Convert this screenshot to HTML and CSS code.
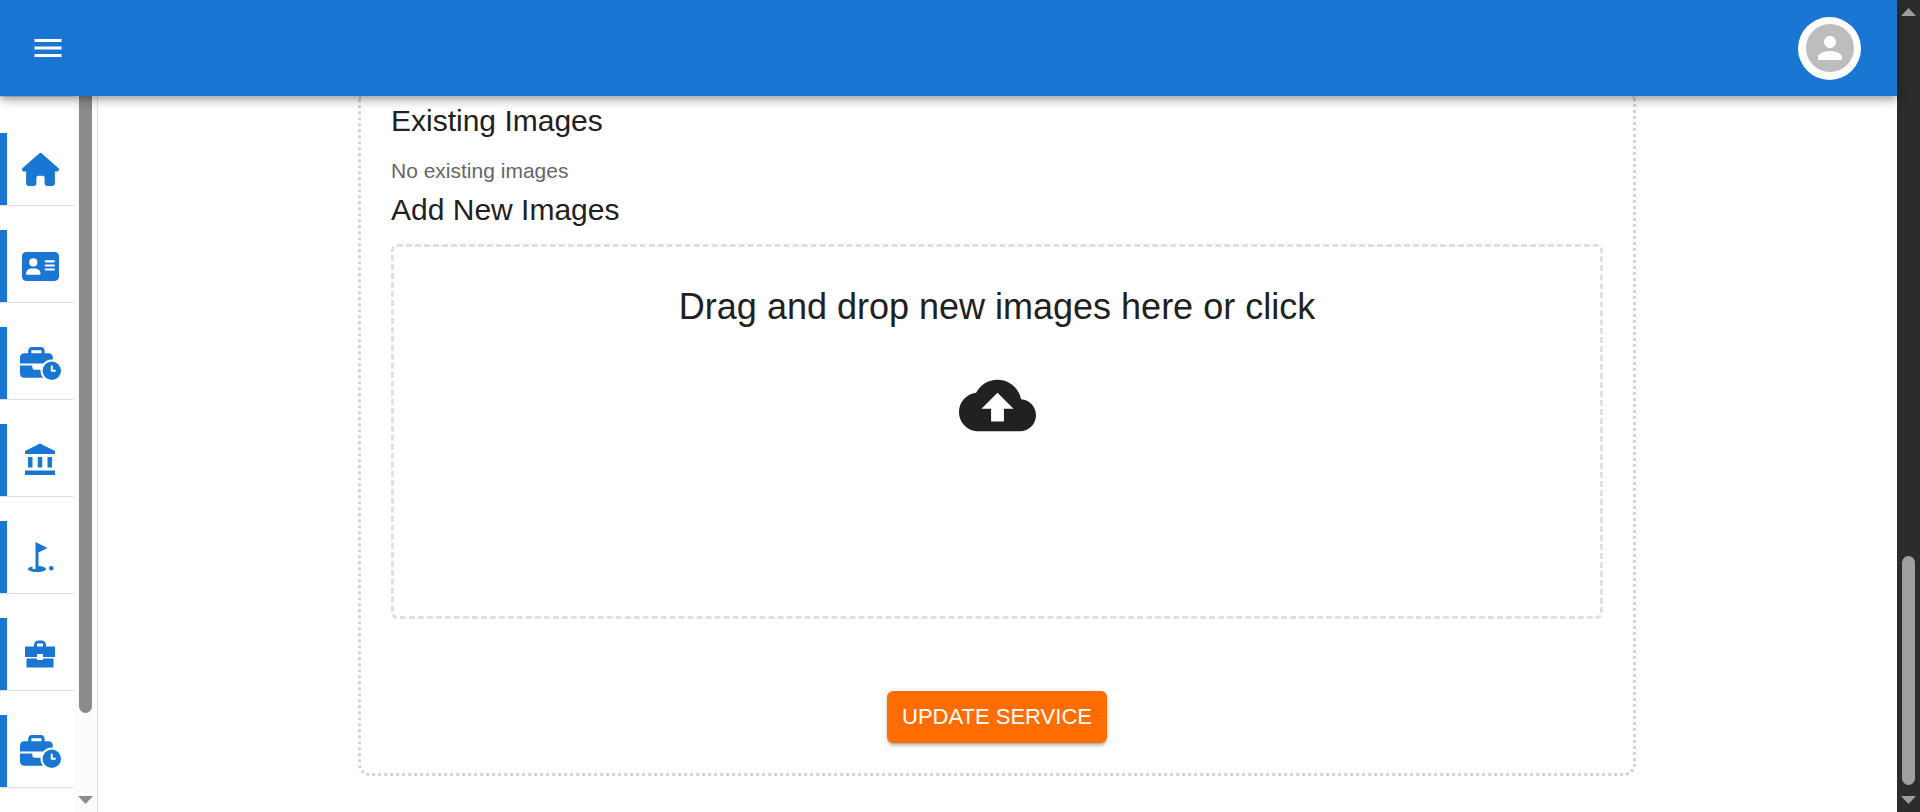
FILE: index.html
```html
<!DOCTYPE html>
<html lang="en">
<head>
  <meta charset="utf-8">
  <title>Update Service</title>
  <link rel="stylesheet" href="styles.css">
</head>
<body>
  <svg class="sprite" aria-hidden="true">
    <symbol id="business-time" viewBox="0 0 640 512">
      <path d="M184 48H328c4.400 0 8 3.600 8 8V96H176V56c0-4.400 3.600-8 8-8zm-56 8V96H64C28.700 96 0 124.700 0 160v96H192 352h8.200c32.300-39.100 81.100-64 135.800-64c5.400 0 10.700 .2 16 .7V160c0-35.300-28.700-64-64-64H384V56c0-30.900-25.100-56-56-56H184c-30.900 0-56 25.100-56 56zM320 352H224c-17.700 0-32-14.300-32-32V288H0V416c0 35.300 28.700 64 64 64H360.200C335.100 449.600 320 410.500 320 368c0-5.400 .2-10.700 .7-16l-.7 0zm320 16a144 144 0 1 0 -288 0 144 144 0 1 0 288 0zM496 288c8.800 0 16 7.200 16 16v48h32c8.800 0 16 7.200 16 16s-7.200 16-16 16H496c-8.800 0-16-7.200-16-16V304c0-8.800 7.200-16 16-16z"/>
    </symbol>
  </svg>

  <div class="app">
    <header class="topbar">
      <button class="icon-button" type="button" aria-label="Open menu">
        <svg class="icon" viewBox="0 0 24 24"><path d="M3 18h18v-2H3zm0-5h18v-2H3zm0-7v2h18V6z"/></svg>
      </button>
      <button class="account" type="button" aria-label="Account">
        <span class="avatar">
          <svg class="icon" viewBox="0 0 24 24"><path d="M12 12c2.210 0 4-1.790 4-4s-1.790-4-4-4-4 1.790-4 4 1.790 4 4 4m0 2c-2.670 0-8 1.340-8 4v2h16v-2c0-2.660-5.330-4-8-4"/></svg>
        </span>
      </button>
    </header>

    <div class="body">
      <aside class="sidebar">
        <nav class="nav">
          <a class="nav-item" href="#" aria-label="Home">
            <svg class="icon-fa" viewBox="0 0 576 512"><path d="M575.8 255.500c0 18-15 32.100-32 32.100h-32l.7 160.200c0 2.700-.2 5.400-.5 8.100V472c0 22.100-17.900 40-40 40H456c-1.100 0-2.200 0-3.300-.1c-1.400 .1-2.800 .1-4.200 .1H416 392c-22.100 0-40-17.900-40-40V448 384c0-17.700-14.300-32-32-32H256c-17.700 0-32 14.300-32 32v64 24c0 22.100-17.900 40-40 40H160 128.100c-1.500 0-3-.1-4.500-.2c-1.200 .1-2.400 .2-3.600 .2H104c-22.100 0-40-17.900-40-40V360c0-.9 0-1.900 .1-2.800V287.600H32c-18 0-32-14-32-32.100c0-9 3-17 10-24L266.400 8c7-7 15-8 22-8s15 2 21 7L564.800 231.500c8 7 12 15 11 24z"/></svg>
          </a>
          <a class="nav-item" href="#" aria-label="Profile">
            <svg class="icon-fa" viewBox="0 0 576 512"><path d="M64 32C28.700 32 0 60.700 0 96V416c0 35.300 28.700 64 64 64H512c35.300 0 64-28.700 64-64V96c0-35.300-28.700-64-64-64H64zm80 256h64c44.200 0 80 35.800 80 80c0 8.800-7.200 16-16 16H80c-8.800 0-16-7.200-16-16c0-44.200 35.800-80 80-80zm-32-96a64 64 0 1 1 128 0 64 64 0 1 1 -128 0zm256-32H496c8.800 0 16 7.200 16 16s-7.200 16-16 16H368c-8.800 0-16-7.200-16-16s7.200-16 16-16zm0 64H496c8.800 0 16 7.200 16 16s-7.200 16-16 16H368c-8.800 0-16-7.200-16-16s7.200-16 16-16zm0 64H496c8.800 0 16 7.200 16 16s-7.200 16-16 16H368c-8.800 0-16-7.200-16-16s7.200-16 16-16z"/></svg>
          </a>
          <a class="nav-item" href="#" aria-label="Business hours">
            <svg class="icon-fa icon-wide"><use href="#business-time"/></svg>
          </a>
          <a class="nav-item" href="#" aria-label="Bank account">
            <svg class="icon" viewBox="0 0 24 24"><path d="M4 10h3v7H4zM10.500 10h3v7h-3zM2 19h20v3H2zM17 10h3v7h-3zM12 1 2 6v2h20V6z"/></svg>
          </a>
          <a class="nav-item" href="#" aria-label="Activities">
            <svg class="icon" viewBox="0 0 24 24"><circle cx="19.500" cy="19.500" r="1.500"/><path d="M17 5.920 9 2v18H7v-1.730c-1.790.35-3 .99-3 1.730 0 1.100 2.690 2 6 2s6-.9 6-2c0-.99-2.160-1.810-5-1.970V8.980z"/></svg>
          </a>
          <a class="nav-item" href="#" aria-label="Services">
            <svg class="icon" viewBox="0 0 24 24"><path fill-rule="evenodd" d="M2 7H8V6C8 4.300 9.300 3 11 3H13C14.700 3 16 4.300 16 6V7H22V14H14V12H10V14H2zM10 7H14V5H10zM3 15H10V16H14V15H21V21H3z"/></svg>
          </a>
          <a class="nav-item" href="#" aria-label="Schedules">
            <svg class="icon-fa icon-wide"><use href="#business-time"/></svg>
          </a>
        </nav>
        <div class="scroll scroll-light">
          <span class="thumb"></span>
          <span class="arrow arrow-down"></span>
        </div>
      </aside>

      <main class="content">
        <form class="card">
          <h2 class="heading">Existing Images</h2>
          <p class="note">No existing images</p>
          <h2 class="heading">Add New Images</h2>
          <button class="dropzone" type="button">
            <span class="drop-title">Drag and drop new images here or click</span>
            <svg class="cloud" viewBox="0 0 24 24"><path d="M19.350 10.040C18.670 6.590 15.640 4 12 4 9.110 4 6.600 5.640 5.350 8.040 2.340 8.360 0 10.910 0 14c0 3.310 2.690 6 6 6h13c2.760 0 5-2.240 5-5 0-2.640-2.050-4.780-4.650-4.960M14 13v4h-4v-4H7l5-5 5 5z"/></svg>
          </button>
          <button class="submit" type="submit">UPDATE SERVICE</button>
        </form>
      </main>
    </div>
  </div>

  <div class="scroll scroll-dark">
    <span class="arrow arrow-up"></span>
    <span class="thumb"></span>
    <span class="arrow arrow-down"></span>
  </div>
</body>
</html>
```
FILE: styles.css
```css
* {
  box-sizing: border-box;
}

body {
  margin: 0;
  display: flex;
  height: 100vh;
  overflow: hidden;
  background: #fff;
  color: #212121;
  font-family: "Liberation Sans", Arial, sans-serif;
}

button {
  border: 0;
  padding: 0;
  background: none;
  color: inherit;
  font: inherit;
  cursor: pointer;
}

svg {
  display: block;
  fill: currentColor;
}

.sprite {
  position: absolute;
  width: 0;
  height: 0;
}

.icon {
  width: 36px;
  height: 36px;
}

.icon-fa {
  width: 37px;
  height: 33px;
}

.icon-wide {
  width: 41px;
}

.app {
  flex: 1;
  min-width: 0;
  display: flex;
  flex-direction: column;
}

/* Top bar */
.topbar {
  position: relative;
  z-index: 1;
  flex: none;
  height: 96px;
  padding: 0 36px 0 30px;
  display: flex;
  align-items: center;
  justify-content: space-between;
  background: #1976d2;
  color: #fff;
  box-shadow: 0 3px 6px -1px rgba(0, 0, 0, 0.2),
    0 6px 8px 0 rgba(0, 0, 0, 0.14),
    0 2px 15px 0 rgba(0, 0, 0, 0.12);
}

.account {
  display: grid;
  place-items: center;
  width: 63px;
  height: 63px;
  border-radius: 50%;
  background: #fff;
}

.avatar {
  display: grid;
  place-items: center;
  width: 48px;
  height: 48px;
  border-radius: 50%;
  background: #bdbdbd;
  color: #fff;
}

/* Sidebar */
.body {
  flex: 1;
  min-height: 0;
  display: flex;
}

.sidebar {
  flex: none;
  display: flex;
  border-right: 1px solid #e0e0e0;
}

.nav {
  width: 74px;
  padding-top: 36px;
  border-top: 1px solid #e0e0e0;
  display: flex;
  flex-direction: column;
  gap: 24px;
  overflow: hidden;
}

.nav-item {
  flex: none;
  height: 73px;
  padding: 0 1px 0 7px;
  display: grid;
  place-items: center;
  border-bottom: 1px solid #e0e0e0;
  color: #1976d2;
  box-shadow: inset 7px 0 #1976d2;
}

/* Scroll tracks */
.scroll {
  flex: none;
  width: 23px;
  display: flex;
  flex-direction: column;
  align-items: center;
  padding: 8px 0;
}

.thumb {
  width: 13px;
  border-radius: 7px;
  background: currentColor;
}

.arrow {
  width: 15px;
  height: 8px;
  background: currentColor;
}

.arrow-up {
  clip-path: polygon(50% 0, 100% 100%, 0 100%);
}

.arrow-down {
  clip-path: polygon(0 0, 100% 0, 50% 100%);
}

.scroll-light {
  padding-top: 0;
  background: #fcfcfc;
  color: #8b8b8b;
}

.scroll-light .thumb {
  flex: 1;
  margin-bottom: 83px;
  border-radius: 0 0 7px 7px;
}

.scroll-dark {
  background: #2c2c2c;
  color: #9f9f9f;
}

.scroll-dark .thumb {
  height: 229px;
  margin: auto 0 11px;
}

/* Service form */
.content {
  flex: 1;
  min-width: 0;
  padding: 0 37px 36px 36px;
}

.card {
  max-width: 1278px;
  margin: 0 auto;
  padding: 1px 30px 30px;
  display: flex;
  flex-direction: column;
  border: 3px dotted #d3d3d3;
  border-top: 0;
  border-radius: 0 0 12px 12px;
}

.heading {
  margin: 0;
  font-size: 30px;
  font-weight: 400;
  line-height: 48px;
}

.note {
  margin: 10px 0 0;
  color: #666;
  font-size: 21px;
  line-height: 31px;
}

.dropzone {
  min-height: 375px;
  margin-top: 10px;
  padding: 36px 24px;
  display: flex;
  flex-direction: column;
  align-items: center;
  justify-content: flex-start;
  gap: 36px;
  border: 3px dashed #e0e0e0;
  border-radius: 6px;
}

.drop-title {
  font-size: 36px;
  line-height: 48px;
}

.cloud {
  width: 77px;
  height: 77px;
}

.submit {
  align-self: center;
  min-width: 220px;
  margin-top: 72px;
  padding: 8px 14px;
  border-radius: 6px;
  background: #ff6d00;
  color: #fff;
  font-size: 22px;
  line-height: 36px;
  box-shadow: 0 4px 2px -3px rgba(0, 0, 0, 0.2),
    0 3px 3px 0 rgba(0, 0, 0, 0.14),
    0 1px 7px 0 rgba(0, 0, 0, 0.12);
}
```
